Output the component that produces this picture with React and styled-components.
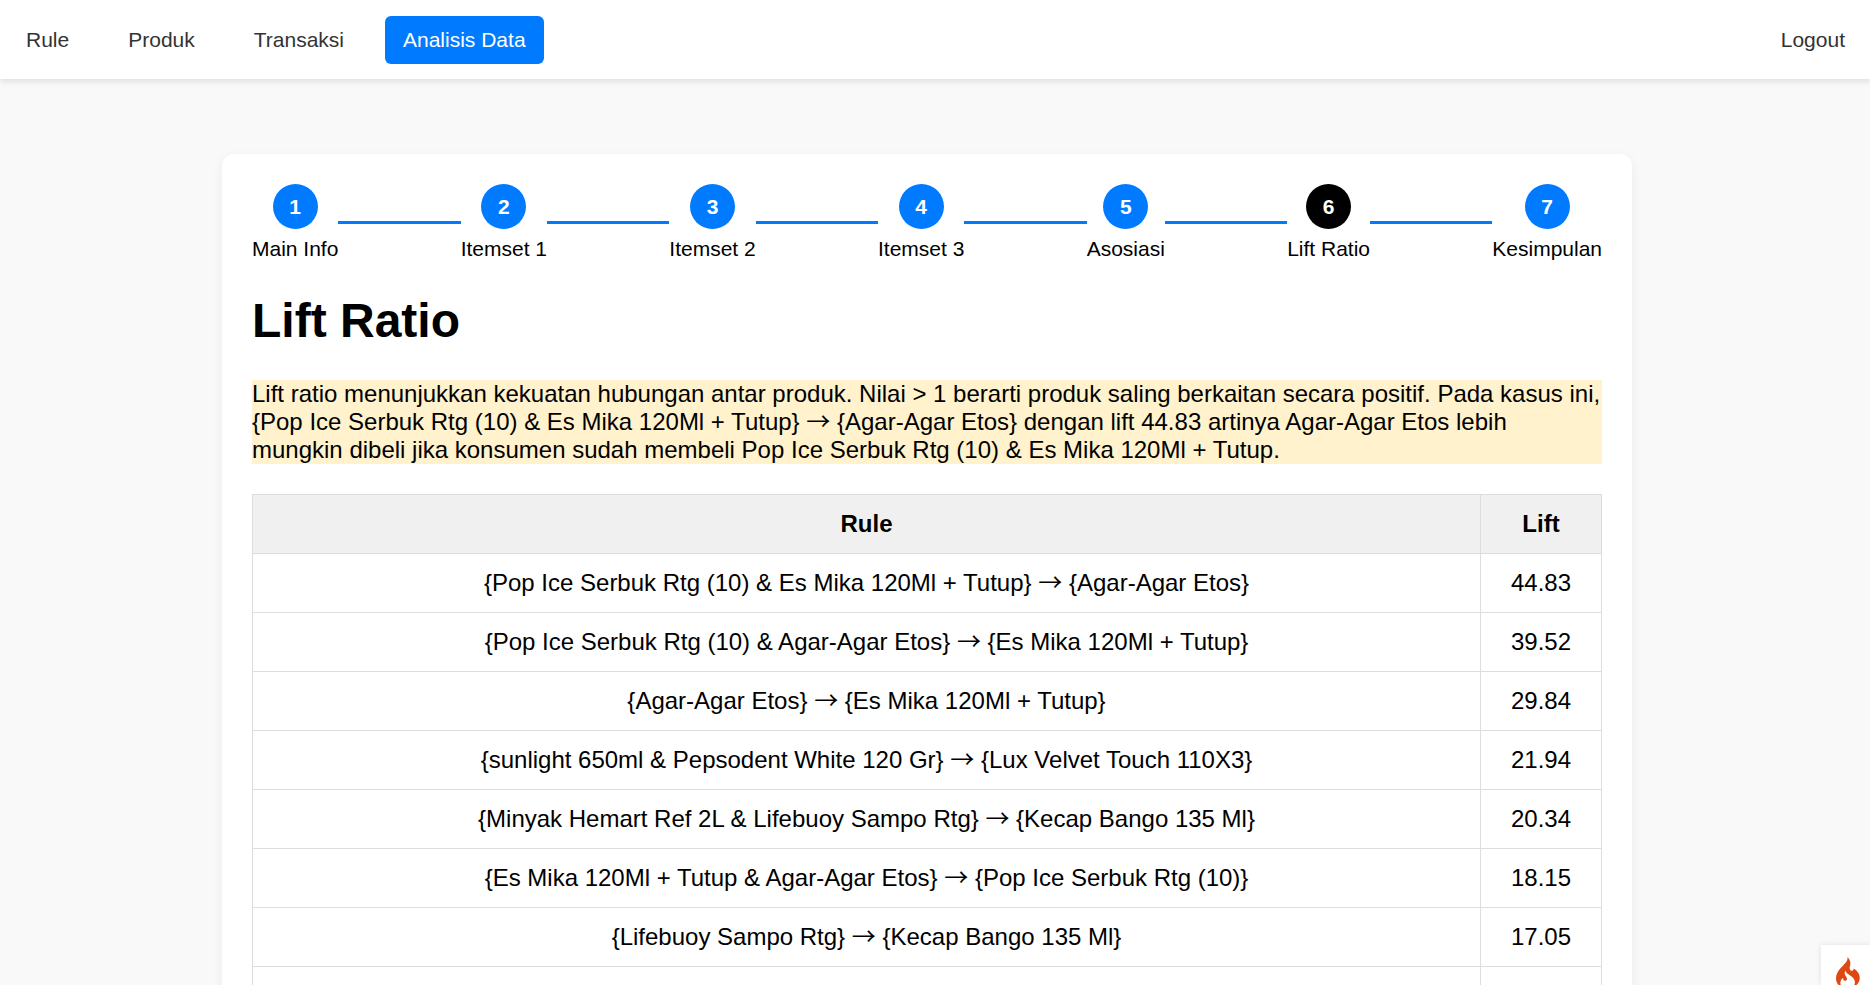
import React from "react";
import styled, { createGlobalStyle } from "styled-components";

const GlobalStyle = createGlobalStyle`
  *, *::before, *::after { box-sizing: border-box; }
  body {
    margin: 0;
    background: #f9f9f9;
    color: #000;
    font-family: "Liberation Sans", Arial, sans-serif;
    font-size: 24px;
    line-height: 28px;
  }
`;

const Header = styled.header`
  display: flex;
  justify-content: space-between;
  align-items: center;
  padding: 16px 7px 15px 8px;
  background: #fff;
  box-shadow: 0 3px 6px rgba(0, 0, 0, 0.1);
`;

const NavGroup = styled.nav`
  display: flex;
  gap: 23px;
`;

const NavLink = styled.a`
  padding: 12px 18px;
  border-radius: 6px;
  font-size: 21px;
  line-height: 24px;
  text-decoration: none;
  color: ${({ $active }) => ($active ? "#fff" : "#333")};
  background: ${({ $active }) => ($active ? "#007bff" : "transparent")};
`;

const Main = styled.main`
  display: flex;
  justify-content: center;
  padding: 75px 16px 75px 0;
`;

const Card = styled.section`
  width: 100%;
  max-width: 1410px;
  padding: 30px;
  border-radius: 12px;
  background: #fff;
  box-shadow: 0 3px 12px rgba(0, 0, 0, 0.06);
`;

const Stepper = styled.ol`
  display: flex;
  align-items: center;
  margin: 0;
  padding: 0;
  list-style: none;
`;

const Step = styled.li`
  display: flex;
  align-items: center;
  flex: ${({ $last }) => ($last ? "none" : "1 0 auto")};

  &::after {
    content: ${({ $last }) => ($last ? "none" : '""')};
    flex: 1;
    height: 3px;
    background: #007bff;
  }
`;

const StepLink = styled.a`
  display: flex;
  flex-direction: column;
  align-items: center;
  gap: 8px;
  font-size: 21px;
  line-height: 24px;
  color: #000;
  text-decoration: none;
`;

const StepNumber = styled.span`
  display: grid;
  place-items: center;
  width: 45px;
  height: 45px;
  border-radius: 50%;
  font-weight: bold;
  color: #fff;
  background: ${({ $current }) => ($current ? "#000" : "#007bff")};
`;

const Title = styled.h1`
  margin: 32px 0;
  font-size: 48px;
  line-height: 55px;
`;

const Note = styled.p`
  margin: 0 0 30px;
  background: #fff2cd;
`;

const Arrow = styled.span`
  font-family: "Noto Sans CJK JP", sans-serif;
  line-height: 16px;
`;

const RuleTable = styled.table`
  width: 100%;
  border-collapse: collapse;
  text-align: center;
`;

const Cell = styled.td`
  height: 59px;
  padding: 15px;
  border: 1px solid #ddd;
`;

const HeadCell = styled(Cell).attrs({ as: "th", scope: "col" })`
  width: ${({ $narrow }) => ($narrow ? "121px" : "auto")};
  background: #f0f0f0;
`;

const DebugButton = styled.button`
  position: fixed;
  right: 0;
  bottom: 0;
  display: flex;
  width: 49px;
  height: 40px;
  padding: 12px 0 0 15px;
  border: 0;
  overflow: hidden;
  background: #fff;
  box-shadow: 0 0 6px rgba(0, 0, 0, 0.1);
  cursor: pointer;
`;

const Flame = styled.svg`
  flex: none;
  width: 24px;
  height: 31px;
  fill: #dd4814;
`;

const navItems = ["Rule", "Produk", "Transaksi", "Analisis Data"];

const steps = [
  "Main Info",
  "Itemset 1",
  "Itemset 2",
  "Itemset 3",
  "Asosiasi",
  "Lift Ratio",
  "Kesimpulan",
];

const rules = [
  { from: "{Pop Ice Serbuk Rtg (10) & Es Mika 120Ml + Tutup}", to: "{Agar-Agar Etos}", lift: "44.83" },
  { from: "{Pop Ice Serbuk Rtg (10) & Agar-Agar Etos}", to: "{Es Mika 120Ml + Tutup}", lift: "39.52" },
  { from: "{Agar-Agar Etos}", to: "{Es Mika 120Ml + Tutup}", lift: "29.84" },
  { from: "{sunlight 650ml & Pepsodent White 120 Gr}", to: "{Lux Velvet Touch 110X3}", lift: "21.94" },
  { from: "{Minyak Hemart Ref 2L & Lifebuoy Sampo Rtg}", to: "{Kecap Bango 135 Ml}", lift: "20.34" },
  { from: "{Es Mika 120Ml + Tutup & Agar-Agar Etos}", to: "{Pop Ice Serbuk Rtg (10)}", lift: "18.15" },
  { from: "{Lifebuoy Sampo Rtg}", to: "{Kecap Bango 135 Ml}", lift: "17.05" },
];

function Rule({ from, to }) {
  return (
    <>
      {from} <Arrow>→</Arrow> {to}
    </>
  );
}

export default function App() {
  return (
    <>
      <GlobalStyle />
      <Header>
        <NavGroup>
          {navItems.map((item) => (
            <NavLink key={item} href="#" $active={item === "Analisis Data"}>
              {item}
            </NavLink>
          ))}
        </NavGroup>
        <NavLink href="#">Logout</NavLink>
      </Header>
      <Main>
        <Card>
          <Stepper>
            {steps.map((label, i) => (
              <Step key={label} $last={i === steps.length - 1}>
                <StepLink href="#">
                  <StepNumber $current={label === "Lift Ratio"}>{i + 1}</StepNumber>
                  {label}
                </StepLink>
              </Step>
            ))}
          </Stepper>
          <Title>Lift Ratio</Title>
          <Note>
            Lift ratio menunjukkan kekuatan hubungan antar produk. Nilai &gt; 1 berarti produk
            saling berkaitan secara positif. Pada kasus ini,{" "}
            <Rule from={rules[0].from} to={rules[0].to} /> dengan lift {rules[0].lift} artinya
            Agar-Agar Etos lebih mungkin dibeli jika konsumen sudah membeli Pop Ice Serbuk Rtg
            (10) &amp; Es Mika 120Ml + Tutup.
          </Note>
          <RuleTable>
            <thead>
              <tr>
                <HeadCell>Rule</HeadCell>
                <HeadCell $narrow>Lift</HeadCell>
              </tr>
            </thead>
            <tbody>
              {rules.map(({ from, to, lift }) => (
                <tr key={from}>
                  <Cell>
                    <Rule from={from} to={to} />
                  </Cell>
                  <Cell>{lift}</Cell>
                </tr>
              ))}
              <tr>
                <Cell />
                <Cell />
              </tr>
            </tbody>
          </RuleTable>
        </Card>
      </Main>
      <DebugButton type="button" aria-label="Debug toolbar">
        <Flame viewBox="0 0 155 200" aria-hidden="true">
          <path d="M73.7 3.7c2.2 7.9-.7 18.5-7.8 29-1.8 2.6-10.7 12.2-19.7 21.3-23.9 24-33.6 37.1-40.3 54.4-7.9 20.6-7.8 40.8.5 58.2C12.8 180 27.6 193 42.5 198l6 2-3-2.2c-21-15.2-22.9-38.7-4.8-58.8 2.5-2.7 4.8-5 5.1-5 .4 0 .7 2.7.7 6.1 0 5.7.2 6.2 3.7 9.5 3 2.7 4.6 3.4 7.8 3.4 5.6 0 9.9-2.4 11.6-6.5 2.9-6.9 1.6-12-5-20.5-10.5-13.4-11.7-23.3-4.3-34.7l3.1-4.8.7 4.7c1.3 8.2 5.8 12.9 25 25.8 20.9 14.1 30.6 26.1 32.8 40.5 1.1 7.2-.1 16.1-3.1 21.8-2.7 5.3-11.2 14.3-16.5 17.4-2.4 1.4-4.3 2.6-4.3 2.8 0 .2 2.4-.4 5.3-1.4 24.1-8.3 42.7-27.1 48.2-48.6 1.9-7.6 1.9-20.2-.1-28.5-3.5-15.2-14.6-30.5-29.9-41.2l-7-4.9-.6 3.3c-.8 4.8-2.6 7.6-5.9 9.3-4.5 2.3-10.3 1.9-13.8-1-6.7-5.7-7.8-14.6-3.7-30.5 3-11.6 3.2-20.6.5-29.1C88.3 18 80.6 6.3 74.8 2.2 73.1.9 73 1 73.7 3.7z" />
        </Flame>
      </DebugButton>
    </>
  );
}
